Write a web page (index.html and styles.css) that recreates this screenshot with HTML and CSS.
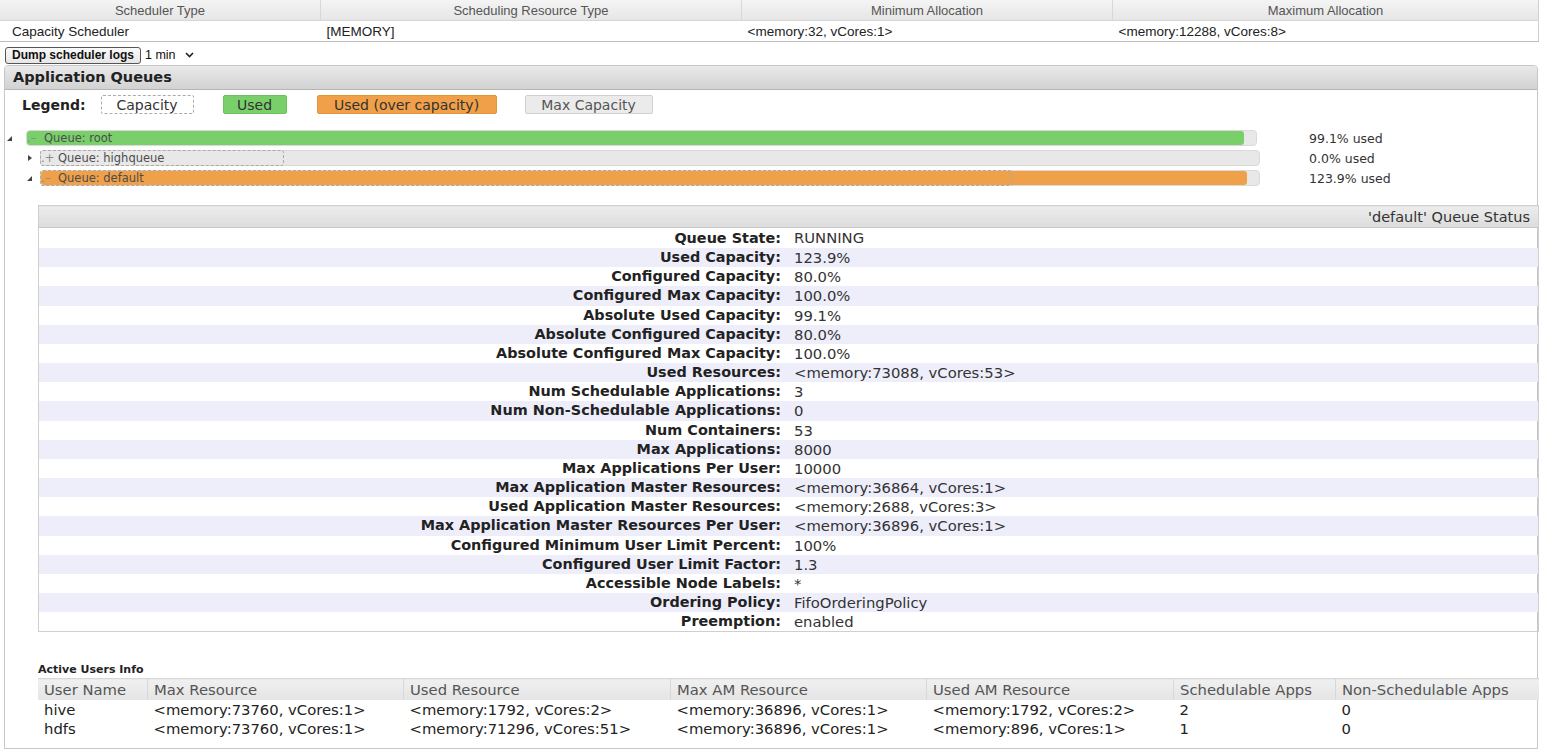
FILE: index.html
```html
<!DOCTYPE html>
<html>
<head>
<meta charset="utf-8">
<link rel="stylesheet" href="styles.css">
</head>
<body>
<table class="sched">
  <thead>
    <tr><th class="c1">Scheduler Type</th><th class="c2">Scheduling Resource Type</th><th class="c3">Minimum Allocation</th><th class="c4">Maximum Allocation</th></tr>
  </thead>
  <tbody>
    <tr><td>Capacity Scheduler</td><td>[MEMORY]</td><td>&lt;memory:32, vCores:1&gt;</td><td>&lt;memory:12288, vCores:8&gt;</td></tr>
  </tbody>
</table>

<div class="dump">
  <button class="dump-btn">Dump scheduler logs</button>
  <span class="sel">1 min <svg width="9" height="6" viewBox="0 0 9 6"><path d="M1 1 L4.5 4.5 L8 1" fill="none" stroke="#222" stroke-width="1.6"/></svg></span>
</div>

<div class="panel">
  <div class="panel-head">Application Queues</div>
  <div class="panel-body">
    <div class="legend">
      <span class="lg-title">Legend:</span>
      <span class="lg lg-cap">Capacity</span>
      <span class="lg lg-used">Used</span>
      <span class="lg lg-over">Used (over capacity)</span>
      <span class="lg lg-max">Max Capacity</span>
    </div>

    <div class="queues">
      <div class="qrow root">
        <span class="tri tri-open"></span>
        <div class="track">
          <div class="fill green" style="width:1217px"></div>
          <div class="qlabel"><span class="mk">.–</span>Queue: root</div>
        </div>
        <span class="qstat">99.1% used</span>
      </div>
      <div class="qrow child">
        <span class="tri tri-closed"></span>
        <div class="track">
          <div class="capbox" style="width:244px"></div>
          <div class="qlabel"><span class="mk">.+</span>Queue: highqueue</div>
        </div>
        <span class="qstat">0.0% used</span>
      </div>
      <div class="qrow child">
        <span class="tri tri-open"></span>
        <div class="track">
          <div class="fill orange" style="width:1206px"></div>
          <div class="capbox" style="width:972px"></div>
          <div class="qlabel"><span class="mk">.–</span>Queue: default</div>
        </div>
        <span class="qstat">123.9% used</span>
      </div>
    </div>

    <table class="status">
      <thead><tr><th colspan="2">'default' Queue Status</th></tr></thead>
      <tbody>
        <tr><th>Queue State:</th><td>RUNNING</td></tr>
        <tr><th>Used Capacity:</th><td>123.9%</td></tr>
        <tr><th>Configured Capacity:</th><td>80.0%</td></tr>
        <tr><th>Configured Max Capacity:</th><td>100.0%</td></tr>
        <tr><th>Absolute Used Capacity:</th><td>99.1%</td></tr>
        <tr><th>Absolute Configured Capacity:</th><td>80.0%</td></tr>
        <tr><th>Absolute Configured Max Capacity:</th><td>100.0%</td></tr>
        <tr><th>Used Resources:</th><td>&lt;memory:73088, vCores:53&gt;</td></tr>
        <tr><th>Num Schedulable Applications:</th><td>3</td></tr>
        <tr><th>Num Non-Schedulable Applications:</th><td>0</td></tr>
        <tr><th>Num Containers:</th><td>53</td></tr>
        <tr><th>Max Applications:</th><td>8000</td></tr>
        <tr><th>Max Applications Per User:</th><td>10000</td></tr>
        <tr><th>Max Application Master Resources:</th><td>&lt;memory:36864, vCores:1&gt;</td></tr>
        <tr><th>Used Application Master Resources:</th><td>&lt;memory:2688, vCores:3&gt;</td></tr>
        <tr><th>Max Application Master Resources Per User:</th><td>&lt;memory:36896, vCores:1&gt;</td></tr>
        <tr><th>Configured Minimum User Limit Percent:</th><td>100%</td></tr>
        <tr><th>Configured User Limit Factor:</th><td>1.3</td></tr>
        <tr><th>Accessible Node Labels:</th><td>*</td></tr>
        <tr><th>Ordering Policy:</th><td>FifoOrderingPolicy</td></tr>
        <tr><th>Preemption:</th><td>enabled</td></tr>
      </tbody>
    </table>

    <div class="users-title">Active Users Info</div>
    <table class="users">
      <thead>
        <tr><th class="u1">User Name</th><th class="u2">Max Resource</th><th class="u3">Used Resource</th><th class="u4">Max AM Resource</th><th class="u5">Used AM Resource</th><th class="u6">Schedulable Apps</th><th class="u7">Non-Schedulable Apps</th></tr>
      </thead>
      <tbody>
        <tr><td>hive</td><td>&lt;memory:73760, vCores:1&gt;</td><td>&lt;memory:1792, vCores:2&gt;</td><td>&lt;memory:36896, vCores:1&gt;</td><td>&lt;memory:1792, vCores:2&gt;</td><td>2</td><td>0</td></tr>
        <tr><td>hdfs</td><td>&lt;memory:73760, vCores:1&gt;</td><td>&lt;memory:71296, vCores:51&gt;</td><td>&lt;memory:36896, vCores:1&gt;</td><td>&lt;memory:896, vCores:1&gt;</td><td>1</td><td>0</td></tr>
      </tbody>
    </table>
  </div>
</div>
</body>
</html>
```

FILE: styles.css
```css
html, body {
  margin: 0;
  padding: 0;
  background: #fff;
  color: #333;
  font-family: "DejaVu Sans", Verdana, sans-serif;
}

/* ---------- scheduler summary table ---------- */
.sched {
  width: 1539px;
  border-collapse: collapse;
  font-family: "Liberation Sans", Arial, sans-serif;
  font-size: 13px;
  border-right: 1px solid #cfcfcf;
  border-bottom: 1px solid #bdbdbd;
}
.sched th {
  height: 20px;
  padding: 0;
  font-weight: normal;
  color: #555;
  background: linear-gradient(#f4f4f4, #e6e6e6);
  border-left: 1px solid #d8d8d8;
  border-bottom: 1px solid #d6d6d6;
}
.sched th.c1 { width: 320px; border-left: none; }
.sched th.c2 { width: 420px; }
.sched th.c3 { width: 370px; }
.sched td {
  height: 20px;
  padding: 0 0 0 12px;
  font-size: 13.5px;
  color: #222;
}
.sched td + td { padding-left: 6px; }

/* ---------- dump ---------- */
.dump {
  display: flex;
  align-items: center;
  height: 18px;
  margin-top: 4px;
  padding-left: 5px;
  font-family: "Liberation Sans", Arial, sans-serif;
}
.dump-btn {
  font-family: "Liberation Sans", Arial, sans-serif;
  font-weight: bold;
  font-size: 12px;
  color: #111;
  height: 17px;
  padding: 0 2px;
  border: 1px solid #555;
  border-radius: 3px;
  background: linear-gradient(#fafafa, #e6e6e6);
  width: 136px;
}
.sel {
  display: flex;
  align-items: center;
  gap: 9px;
  font-size: 12.5px;
  color: #111;
  margin-left: 4px;
}

/* ---------- panel ---------- */
.panel {
  margin: 1px 3px 0 4px;
  border: 1px solid #c6c6c6;
  border-radius: 4px 4px 0 0;
  height: 682px;
}
.panel-head {
  height: 23px;
  line-height: 23px;
  padding-left: 8px;
  font-weight: bold;
  font-size: 14.5px;
  color: #222;
  background: linear-gradient(#e9e9e9, #d2d2d2);
  border-bottom: 1px solid #b5b5b5;
  border-radius: 3px 3px 0 0;
}
.panel-body {
  padding: 5px 0 0 0;
}

/* legend */
.legend {
  display: flex;
  align-items: center;
  height: 19px;
  padding-left: 17px;
  font-size: 14px;
}
.lg-title {
  font-weight: bold;
  color: #222;
  margin-right: 15px;
}
.lg {
  height: 19px;
  line-height: 18px;
  box-sizing: border-box;
  text-align: center;
  color: #333;
  border-radius: 2px;
}
.lg-cap { width: 93px; border: 1px dashed #aaa; margin-right: 29px; }
.lg-used { width: 64px; background: #79cf6a; border: 1px solid #6cc05d; margin-right: 30px; }
.lg-over { width: 180px; background: #efa048; border: 1px solid #e39439; margin-right: 28px; }
.lg-max { width: 128px; background: #ebebeb; border: 1px solid #d0d0d0; color: #555; }

/* queues */
.queues {
  margin-top: 16px;
  display: flex;
  flex-direction: column;
  gap: 4px;
}
.qrow {
  display: flex;
  align-items: center;
  height: 16px;
}
.tri {
  width: 0;
  height: 0;
  flex: none;
}
.tri-open {
  border-left: 5px solid transparent;
  border-bottom: 5px solid #444;
}
.tri-closed {
  border-top: 3px solid transparent;
  border-bottom: 3px solid transparent;
  border-left: 4px solid #444;
}
.root .tri { margin-left: 2px; margin-right: 14px; }
.child .tri-open { margin-left: 22px; margin-right: 8px; }
.child .tri-closed { margin-left: 23px; margin-right: 8px; }

.track {
  position: relative;
  height: 16px;
  box-sizing: border-box;
  background: #e8e8e8;
  border: 1px solid #dadada;
  border-radius: 4px;
}
.root .track { width: 1231px; }
.child .track { width: 1220px; }
.fill {
  position: absolute;
  left: 0;
  top: 0;
  height: 14px;
  border-radius: 3px;
}
.green { background: #79cf6a; }
.orange { background: #efa048; }
.capbox {
  position: absolute;
  left: -1px;
  top: -1px;
  height: 16px;
  box-sizing: border-box;
  border: 1px dashed #aaa;
  border-radius: 3px;
}
.qlabel {
  position: absolute;
  left: 0;
  top: 0;
  line-height: 14px;
  font-size: 11.5px;
  color: #4d4d4d;
  white-space: nowrap;
}
.mk {
  display: inline-block;
  width: 17px;
  color: #8a8a8a;
}
.qstat {
  font-size: 12.5px;
  color: #333;
  white-space: nowrap;
}
.root .qstat { margin-left: 52px; }
.child .qstat { margin-left: 49px; }

/* status table */
.status {
  margin: 19px 0 0 33px;
  width: 1501px;
  border-collapse: collapse;
  border: 1px solid #cfcfcf;
  font-size: 14.8px;
}
.status thead th {
  height: 21px;
  padding: 0 8px 0 0;
  text-align: right;
  font-weight: normal;
  font-size: 14.5px;
  color: #333;
  background: linear-gradient(#ececec, #dcdcdc);
  border-bottom: 1px solid #c8c8c8;
}
.status tbody th,
.status tbody td {
  height: 19.15px;
  padding: 0;
  line-height: 19.15px;
}
.status tbody tr:first-child th,
.status tbody tr:first-child td { height: 20.15px; line-height: 20.15px; }
.status tbody th {
  width: 742px;
  padding-right: 8px;
  text-align: right;
  font-weight: bold;
  color: #222;
  font-size: 14.4px;
}
.status tbody td {
  padding-left: 5px;
  color: #333;
}
.status tbody tr:nth-child(even) { background: #eeeefb; }

/* users */
.users-title {
  margin: 31px 0 0 33px;
  font-size: 11px;
  font-weight: bold;
  color: #222;
}
.users {
  margin: 2px 0 0 33px;
  width: 1501px;
  border-collapse: collapse;
  font-size: 14.8px;
}
.users th {
  height: 21px;
  padding: 0 0 0 6px;
  text-align: left;
  font-weight: normal;
  color: #555;
  background: linear-gradient(#f0f0f0, #e4e4e4);
  border-top: 1px solid #d8d8d8;
  border-left: 1px solid #d8d8d8;
}
.users th.u1 { border-left: none; width: 103px; }
.users th.u2 { width: 249px; }
.users th.u3 { width: 260px; }
.users th.u4 { width: 249px; }
.users th.u5 { width: 240px; }
.users th.u6 { width: 155px; }
.users td {
  height: 19px;
  padding: 0 0 0 6px;
  color: #222;
}
```
